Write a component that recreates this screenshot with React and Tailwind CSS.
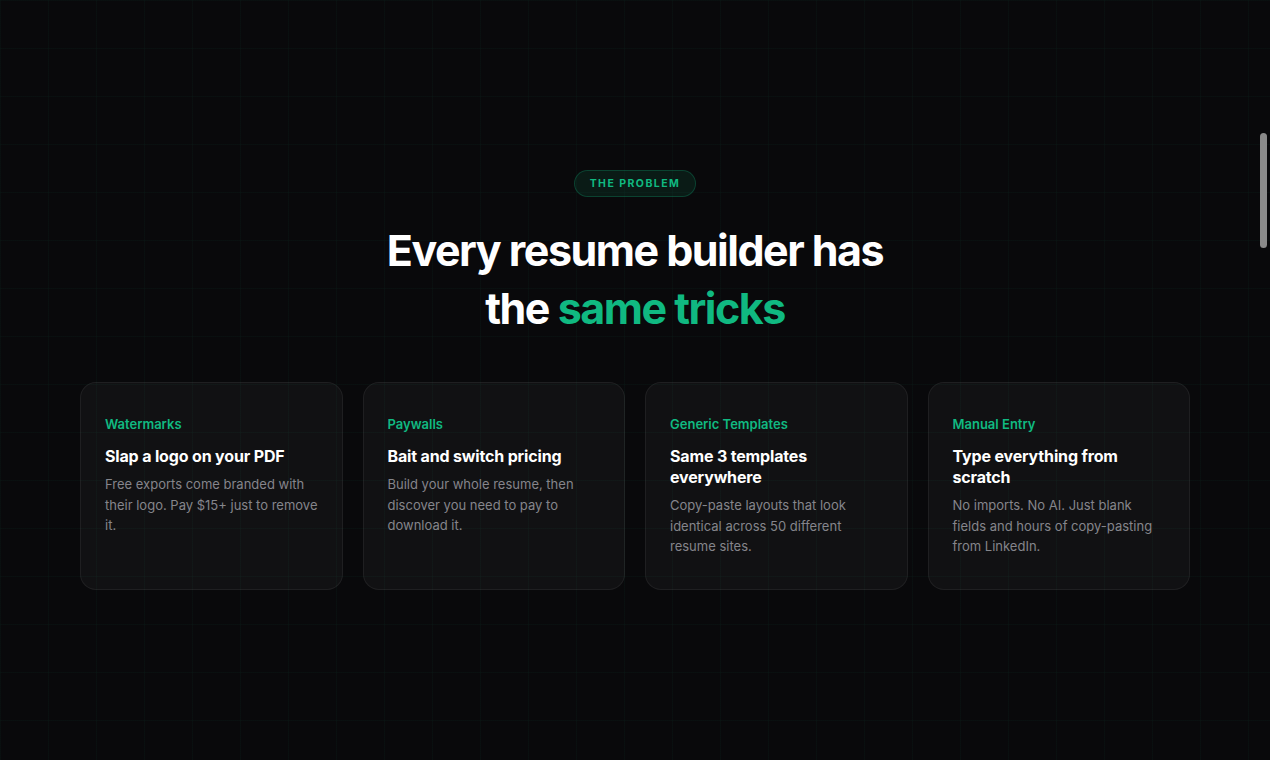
const problems = [
  {
    tag: 'Watermarks',
    title: 'Slap a logo on your PDF',
    body: 'Free exports come branded with their logo. Pay $15+ just to remove it.',
  },
  {
    tag: 'Paywalls',
    title: 'Bait and switch pricing',
    body: 'Build your whole resume, then discover you need to pay to download it.',
  },
  {
    tag: 'Generic Templates',
    title: 'Same 3 templates everywhere',
    body: 'Copy-paste layouts that look identical across 50 different resume sites.',
  },
  {
    tag: 'Manual Entry',
    title: 'Type everything from scratch',
    body: 'No imports. No AI. Just blank fields and hours of copy-pasting from LinkedIn.',
  },
];

const ProblemCard = ({ tag, title, body }) => (
  <div className="rounded-2xl border border-white/[0.06] bg-white/[0.035] px-6 pt-8 pb-8">
    <div className="text-[13px] font-semibold leading-[18px] text-[#10b981]">{tag}</div>
    <div className="mt-[13px] text-[16px] font-bold leading-[21px] tracking-[-0.01em] text-white">
      {title}
    </div>
    <p className="mt-[7px] text-[13px] leading-[20.5px] text-[#85858b]">{body}</p>
  </div>
);

export default function App() {
  return (
    <div
      className="min-h-[760px] w-full bg-[#09090b] bg-[linear-gradient(to_right,rgba(16,185,129,0.035)_1px,transparent_1px),linear-gradient(to_bottom,rgba(16,185,129,0.035)_1px,transparent_1px)] bg-[size:48px_48px] bg-[position:0_0]"
      style={{ fontFamily: 'Inter, "Noto Sans", sans-serif' }}
    >
      <section className="mx-auto flex max-w-[1110px] flex-col items-center pt-[170px] pb-24">
        <span className="rounded-full border border-[#10b981]/25 bg-[#10b981]/10 px-[15px] py-[5px] text-[10.5px] font-bold leading-[15px] tracking-[0.14em] text-[#10b981]">
          THE PROBLEM
        </span>
        <h2 className="mt-6 text-center text-[43px] font-bold leading-[58px] tracking-[-0.035em] text-white">
          Every resume builder has
          <br />
          the <span className="text-[#10b981]">same tricks</span>
        </h2>
        <div className="mt-[45px] grid w-full grid-cols-4 gap-5">
          {problems.map((p, i) => (
            <ProblemCard key={i} {...p} />
          ))}
        </div>
      </section>
      <div className="fixed right-[3px] top-[133px] h-[115px] w-[7px] rounded-full bg-[#8a8a8a]" />
    </div>
  );
}
